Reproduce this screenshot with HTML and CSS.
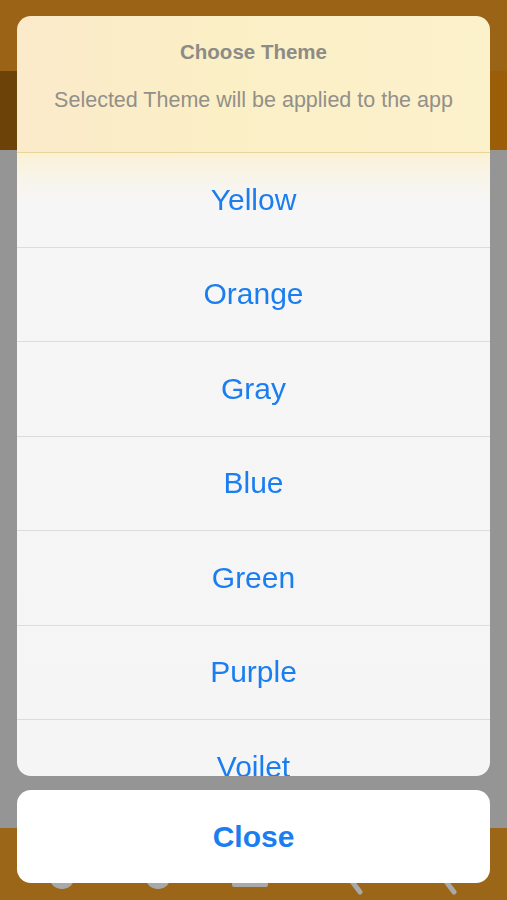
FILE: index.html
```html
<!DOCTYPE html>
<html lang="en">
<head>
<meta charset="utf-8">
<title>Choose Theme</title>
<link rel="stylesheet" href="styles.css">
</head>
<body>
<div class="app">
  <div class="nav"></div>
  <div class="subbar"></div>
  <div class="content"></div>
  <div class="tabbar">
    <svg class="tab-icon" width="40" height="30" viewBox="0 0 40 30"><circle cx="20" cy="7" r="13" fill="#a9a9a9"/></svg>
    <svg class="tab-icon" width="40" height="30" viewBox="0 0 40 30"><circle cx="20" cy="7" r="13" fill="#a9a9a9"/></svg>
    <svg class="tab-icon" width="40" height="30" viewBox="0 0 40 30"><rect x="2" y="0" width="36" height="18" rx="2" fill="#a9a9a9"/></svg>
    <svg class="tab-icon" width="40" height="30" viewBox="0 0 40 30"><line x1="4" y1="2" x2="20" y2="23" stroke="#a9a9a9" stroke-width="5" stroke-linecap="round"/></svg>
    <svg class="tab-icon" width="40" height="30" viewBox="0 0 40 30"><line x1="4" y1="2" x2="20" y2="23" stroke="#a9a9a9" stroke-width="5" stroke-linecap="round"/></svg>
  </div>
</div>

<div class="overlay">
  <div class="sheet">
    <div class="sheet-header">
      <div class="sheet-title">Choose Theme</div>
      <div class="sheet-message">Selected Theme will be applied to the app</div>
    </div>
    <div class="sheet-list">
      <div class="sheet-item first">Yellow</div>
      <div class="sheet-item">Orange</div>
      <div class="sheet-item">Gray</div>
      <div class="sheet-item">Blue</div>
      <div class="sheet-item">Green</div>
      <div class="sheet-item">Purple</div>
      <div class="sheet-item">Voilet</div>
    </div>
  </div>
  <div class="cancel">Close</div>
</div>
</body>
</html>
```

FILE: styles.css
```css
* { box-sizing: border-box; }

html, body {
  margin: 0;
  padding: 0;
  width: 507px;
  height: 900px;
  overflow: hidden;
  font-family: "Liberation Sans", Arial, sans-serif;
}

.app {
  display: flex;
  flex-direction: column;
  height: 900px;
}

.nav {
  height: 71px;
  background: #9b6316;
}

.subbar {
  height: 79px;
  background: linear-gradient(90deg, #6c4208 0%, #7e4f0b 45%, #9c5e08 100%);
}

.content {
  flex: 1;
  background: #959595;
}

.tabbar {
  height: 72px;
  background: #9c6619;
  display: flex;
  align-items: flex-start;
  padding: 41px 0 0 42px;
  gap: 56px;
}

.tab-icon {
  display: block;
  flex: none;
}

.tab-icon:nth-child(3) { margin-left: -4px; }
.tab-icon:nth-child(4) { margin-left: 14px; }
.tab-icon:nth-child(5) { margin-left: -2px; }

.overlay {
  position: fixed;
  left: 0;
  top: 0;
  width: 507px;
  height: 900px;
  padding: 16px 17px 17px 17px;
  display: flex;
  flex-direction: column;
  gap: 14px;
}

.sheet {
  flex: 1;
  min-height: 0;
  border-radius: 14px;
  overflow: hidden;
  display: flex;
  flex-direction: column;
}

.sheet-header {
  height: 137px;
  flex: none;
  background: linear-gradient(90deg, #fbeacb 0%, #fbefc6 40%, #fbf1cb 100%);
  border-bottom: 1px solid #e9d59a;
  display: flex;
  flex-direction: column;
  align-items: center;
  padding-top: 24px;
}

.sheet-title {
  font-size: 20.5px;
  font-weight: bold;
  color: #8d8b86;
  line-height: 24px;
}

.sheet-message {
  margin-top: 23px;
  font-size: 21.5px;
  color: #929089;
  line-height: 26px;
}

.sheet-list {
  flex: 1;
  min-height: 0;
  overflow: hidden;
  background: linear-gradient(180deg, #fbf1d3 0px, #f8f4e8 22px, #f6f6f6 48px, #f5f5f5 100%);
}

.sheet-item {
  height: 94.5px;
  flex: none;
  display: flex;
  align-items: center;
  justify-content: center;
  font-size: 30px;
  color: #1a7ef0;
  border-top: 1px solid #dcdcdc;
}

.sheet-item.first {
  height: 93.5px;
  border-top: none;
}

.cancel {
  height: 93px;
  flex: none;
  background: #ffffff;
  border-radius: 14px;
  display: flex;
  align-items: center;
  justify-content: center;
  font-size: 30px;
  font-weight: bold;
  color: #1a7ef0;
}
```
